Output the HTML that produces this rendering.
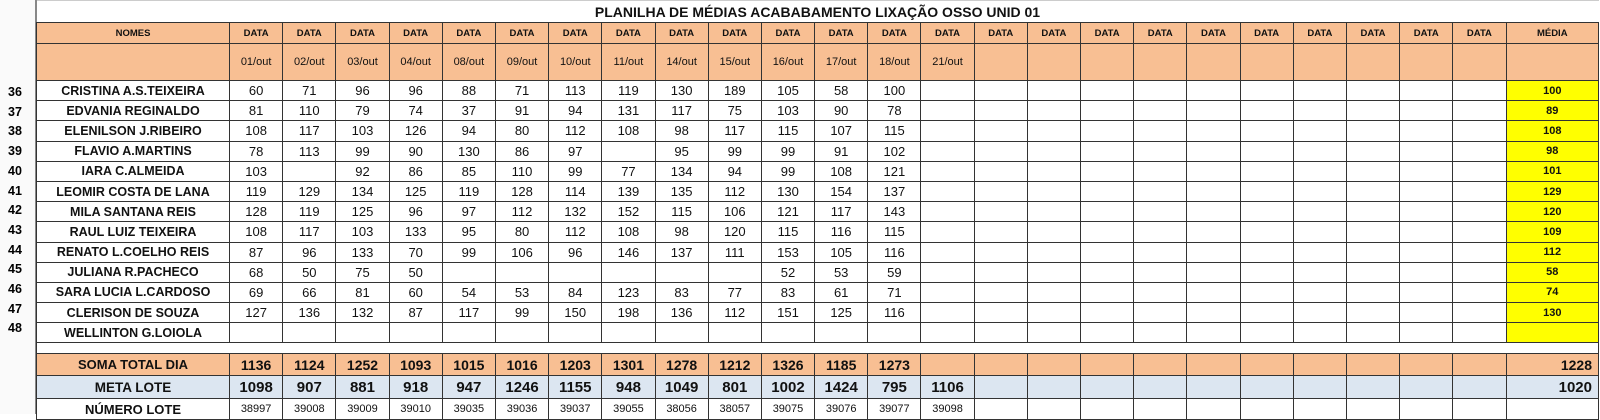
<!DOCTYPE html><html><head><meta charset="utf-8"><style>
body{margin:0;width:1600px;height:414px;background:#fff;overflow:hidden;font-family:"Liberation Sans",Calibri,sans-serif;position:relative}
#g{position:absolute;left:0;top:0;width:35px;height:414px;background:#fafafa;border-right:2px solid #888}
.rn{position:absolute;left:0;width:30px;text-align:center;font-weight:bold;font-size:12.5px;height:19.7px;line-height:19.7px}
table{position:absolute;left:36px;top:0;border-collapse:collapse;table-layout:fixed;width:1563px}
td{border:1px solid #333;padding:0;text-align:center;font-size:13px;white-space:nowrap;overflow:hidden;color:#111}
.o td{background:#F8BF93}
.h td{font-size:9.5px;font-weight:bold;height:20px}
.d td{font-size:11px;height:36px}
.r td{height:19.2px}
.r td:first-child{font-weight:bold;font-size:12.5px}
.y{background:#FFFF00;font-weight:bold;font-size:11px!important}
.s td{font-weight:bold;font-size:14px;height:21px}
.s td:first-child{font-size:13px}
.m td{background:#DCE6F1;font-weight:bold;font-size:15px;height:22px}
.m td:first-child{font-size:13.5px}
.l td{font-size:11px;height:20px}
.l td:first-child{font-weight:bold;font-size:13px}
</style></head><body>
<div id="g"></div>
<div class="rn" style="top:83px">36</div><div class="rn" style="top:102.7px">37</div><div class="rn" style="top:122.4px">38</div><div class="rn" style="top:142.1px">39</div><div class="rn" style="top:161.8px">40</div><div class="rn" style="top:181.5px">41</div><div class="rn" style="top:201.2px">42</div><div class="rn" style="top:220.9px">43</div><div class="rn" style="top:240.6px">44</div><div class="rn" style="top:260.3px">45</div><div class="rn" style="top:280px">46</div><div class="rn" style="top:299.7px">47</div><div class="rn" style="top:319.4px">48</div>
<table>
<colgroup><col style="width:193px"><col span="24" style="width:53.2px"><col style="width:92px"></colgroup>
<tr><td colspan="26" style="border:none;border-top:1px solid #ccc;height:21px;font-weight:bold;font-size:14px;text-align:center">PLANILHA DE MÉDIAS ACABABAMENTO LIXAÇÃO OSSO UNID 01</td></tr>
<tr class="o h"><td>NOMES</td><td>DATA</td><td>DATA</td><td>DATA</td><td>DATA</td><td>DATA</td><td>DATA</td><td>DATA</td><td>DATA</td><td>DATA</td><td>DATA</td><td>DATA</td><td>DATA</td><td>DATA</td><td>DATA</td><td>DATA</td><td>DATA</td><td>DATA</td><td>DATA</td><td>DATA</td><td>DATA</td><td>DATA</td><td>DATA</td><td>DATA</td><td>DATA</td><td>MÉDIA</td></tr>
<tr class="o d"><td></td><td>01/out</td><td>02/out</td><td>03/out</td><td>04/out</td><td>08/out</td><td>09/out</td><td>10/out</td><td>11/out</td><td>14/out</td><td>15/out</td><td>16/out</td><td>17/out</td><td>18/out</td><td>21/out</td><td></td><td></td><td></td><td></td><td></td><td></td><td></td><td></td><td></td><td></td><td></td></tr>
<tr class="r"><td>CRISTINA A.S.TEIXEIRA</td><td>60</td><td>71</td><td>96</td><td>96</td><td>88</td><td>71</td><td>113</td><td>119</td><td>130</td><td>189</td><td>105</td><td>58</td><td>100</td><td></td><td></td><td></td><td></td><td></td><td></td><td></td><td></td><td></td><td></td><td></td><td class="y">100</td></tr>
<tr class="r"><td>EDVANIA REGINALDO</td><td>81</td><td>110</td><td>79</td><td>74</td><td>37</td><td>91</td><td>94</td><td>131</td><td>117</td><td>75</td><td>103</td><td>90</td><td>78</td><td></td><td></td><td></td><td></td><td></td><td></td><td></td><td></td><td></td><td></td><td></td><td class="y">89</td></tr>
<tr class="r"><td>ELENILSON J.RIBEIRO</td><td>108</td><td>117</td><td>103</td><td>126</td><td>94</td><td>80</td><td>112</td><td>108</td><td>98</td><td>117</td><td>115</td><td>107</td><td>115</td><td></td><td></td><td></td><td></td><td></td><td></td><td></td><td></td><td></td><td></td><td></td><td class="y">108</td></tr>
<tr class="r"><td>FLAVIO A.MARTINS</td><td>78</td><td>113</td><td>99</td><td>90</td><td>130</td><td>86</td><td>97</td><td></td><td>95</td><td>99</td><td>99</td><td>91</td><td>102</td><td></td><td></td><td></td><td></td><td></td><td></td><td></td><td></td><td></td><td></td><td></td><td class="y">98</td></tr>
<tr class="r"><td>IARA C.ALMEIDA</td><td>103</td><td></td><td>92</td><td>86</td><td>85</td><td>110</td><td>99</td><td>77</td><td>134</td><td>94</td><td>99</td><td>108</td><td>121</td><td></td><td></td><td></td><td></td><td></td><td></td><td></td><td></td><td></td><td></td><td></td><td class="y">101</td></tr>
<tr class="r"><td>LEOMIR COSTA DE LANA</td><td>119</td><td>129</td><td>134</td><td>125</td><td>119</td><td>128</td><td>114</td><td>139</td><td>135</td><td>112</td><td>130</td><td>154</td><td>137</td><td></td><td></td><td></td><td></td><td></td><td></td><td></td><td></td><td></td><td></td><td></td><td class="y">129</td></tr>
<tr class="r"><td>MILA SANTANA REIS</td><td>128</td><td>119</td><td>125</td><td>96</td><td>97</td><td>112</td><td>132</td><td>152</td><td>115</td><td>106</td><td>121</td><td>117</td><td>143</td><td></td><td></td><td></td><td></td><td></td><td></td><td></td><td></td><td></td><td></td><td></td><td class="y">120</td></tr>
<tr class="r"><td>RAUL LUIZ TEIXEIRA</td><td>108</td><td>117</td><td>103</td><td>133</td><td>95</td><td>80</td><td>112</td><td>108</td><td>98</td><td>120</td><td>115</td><td>116</td><td>115</td><td></td><td></td><td></td><td></td><td></td><td></td><td></td><td></td><td></td><td></td><td></td><td class="y">109</td></tr>
<tr class="r"><td>RENATO L.COELHO REIS</td><td>87</td><td>96</td><td>133</td><td>70</td><td>99</td><td>106</td><td>96</td><td>146</td><td>137</td><td>111</td><td>153</td><td>105</td><td>116</td><td></td><td></td><td></td><td></td><td></td><td></td><td></td><td></td><td></td><td></td><td></td><td class="y">112</td></tr>
<tr class="r"><td>JULIANA R.PACHECO</td><td>68</td><td>50</td><td>75</td><td>50</td><td></td><td></td><td></td><td></td><td></td><td></td><td>52</td><td>53</td><td>59</td><td></td><td></td><td></td><td></td><td></td><td></td><td></td><td></td><td></td><td></td><td></td><td class="y">58</td></tr>
<tr class="r"><td>SARA LUCIA L.CARDOSO</td><td>69</td><td>66</td><td>81</td><td>60</td><td>54</td><td>53</td><td>84</td><td>123</td><td>83</td><td>77</td><td>83</td><td>61</td><td>71</td><td></td><td></td><td></td><td></td><td></td><td></td><td></td><td></td><td></td><td></td><td></td><td class="y">74</td></tr>
<tr class="r"><td>CLERISON DE SOUZA</td><td>127</td><td>136</td><td>132</td><td>87</td><td>117</td><td>99</td><td>150</td><td>198</td><td>136</td><td>112</td><td>151</td><td>125</td><td>116</td><td></td><td></td><td></td><td></td><td></td><td></td><td></td><td></td><td></td><td></td><td></td><td class="y">130</td></tr>
<tr class="r"><td>WELLINTON G.LOIOLA</td><td></td><td></td><td></td><td></td><td></td><td></td><td></td><td></td><td></td><td></td><td></td><td></td><td></td><td></td><td></td><td></td><td></td><td></td><td></td><td></td><td></td><td></td><td></td><td></td><td class="y"></td></tr>
<tr><td colspan="26" style="height:10px"></td></tr>
<tr class="o s"><td>SOMA TOTAL DIA</td><td>1136</td><td>1124</td><td>1252</td><td>1093</td><td>1015</td><td>1016</td><td>1203</td><td>1301</td><td>1278</td><td>1212</td><td>1326</td><td>1185</td><td>1273</td><td></td><td></td><td></td><td></td><td></td><td></td><td></td><td></td><td></td><td></td><td></td><td style="text-align:right;padding-right:6px">1228</td></tr>
<tr class="m"><td>META LOTE</td><td>1098</td><td>907</td><td>881</td><td>918</td><td>947</td><td>1246</td><td>1155</td><td>948</td><td>1049</td><td>801</td><td>1002</td><td>1424</td><td>795</td><td>1106</td><td></td><td></td><td></td><td></td><td></td><td></td><td></td><td></td><td></td><td></td><td style="text-align:right;padding-right:6px">1020</td></tr>
<tr class="l"><td>NÚMERO LOTE</td><td>38997</td><td>39008</td><td>39009</td><td>39010</td><td>39035</td><td>39036</td><td>39037</td><td>39055</td><td>38056</td><td>38057</td><td>39075</td><td>39076</td><td>39077</td><td>39098</td><td></td><td></td><td></td><td></td><td></td><td></td><td></td><td></td><td></td><td></td><td></td></tr>
</table>
</body></html>
